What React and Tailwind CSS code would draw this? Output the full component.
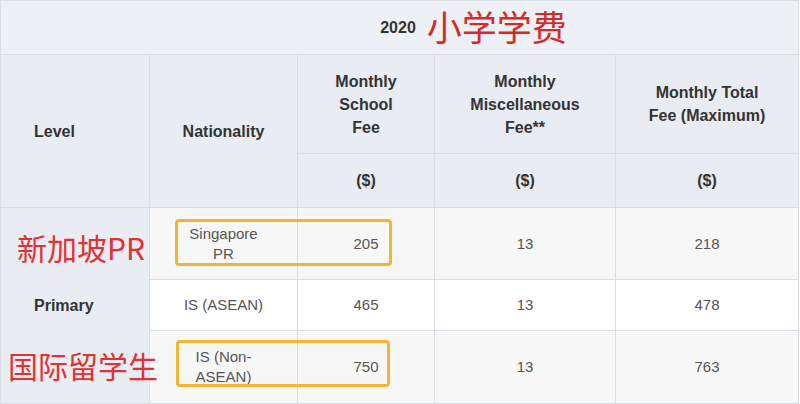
import React from "react";

const rows = [
  { nat: <>Singapore<br />PR</>, school: "205", misc: "13", total: "218", bg: "bg-[#f7f7f7]", h: "h-[72px]" },
  { nat: "IS (ASEAN)", school: "465", misc: "13", total: "478", bg: "bg-white", h: "h-[51px]" },
  { nat: <>IS (Non-<br />ASEAN)</>, school: "750", misc: "13", total: "763", bg: "bg-[#f7f7f7]", h: "h-[73px]" },
];

const App = () => {
  return (
    <div className="relative w-[800px] h-[404px] bg-white font-['Liberation_Sans',Arial,sans-serif] overflow-hidden">
      <table className="w-[798px] table-fixed border-collapse border border-[#d9dee4]">
        <colgroup>
          <col className="w-[149px]" />
          <col className="w-[148px]" />
          <col className="w-[137px]" />
          <col className="w-[181px]" />
          <col className="w-[183px]" />
        </colgroup>
        <thead className="text-[#333] text-[16px] font-bold leading-[23px]">
          {/* Title row */}
          <tr className="h-[54px] bg-[#edf0f4]">
            <th colSpan={5} className="border border-[#d9dee4] p-0">
              <div className="flex items-center justify-center gap-[11px] pl-[148px]">
                <span>2020</span>
                <span className="text-[35px] leading-none font-normal text-[#d42a2a] font-['Noto_Sans_CJK_SC',sans-serif] -mt-[4px]">
                  小学学费
                </span>
              </div>
            </th>
          </tr>
          <tr className="h-[99px] bg-[#e9ecf2]">
            <th rowSpan={2} className="border border-[#d9dee4] text-left pl-[33px] font-bold">
              Level
            </th>
            <th rowSpan={2} className="border border-[#d9dee4] text-center">
              Nationality
            </th>
            <th className="border border-[#d9dee4] text-center">
              Monthly<br />School<br />Fee
            </th>
            <th className="border border-[#d9dee4] text-center">
              Monthly<br />Miscellaneous<br />Fee**
            </th>
            <th className="border border-[#d9dee4] text-center">
              Monthly Total<br />Fee (Maximum)
            </th>
          </tr>
          <tr className="h-[54px] bg-[#e9ecf2]">
            <th className="border border-[#d9dee4] text-center">($)</th>
            <th className="border border-[#d9dee4] text-center">($)</th>
            <th className="border border-[#d9dee4] text-center">($)</th>
          </tr>
        </thead>
        <tbody className="text-[15px] text-[#555] leading-[20px]">
          {rows.map((r, i) => (
            <tr key={i} className={`${r.h} ${r.bg}`}>
              {i === 0 && (
                <td rowSpan={3} className="border border-[#d9dee4] bg-[#e9ecf2] pl-[33px] text-[16px] font-bold text-[#333]">
                  Primary
                </td>
              )}
              <td className="border border-[#d9dee4] text-center">{r.nat}</td>
              <td className="border border-[#d9dee4] text-center">{r.school}</td>
              <td className="border border-[#d9dee4] text-center">{r.misc}</td>
              <td className="border border-[#d9dee4] text-center">{r.total}</td>
            </tr>
          ))}
        </tbody>
      </table>

      {/* annotations over the table */}
      <div className="absolute left-[175px] top-[219px] w-[217px] h-[47px] border-[3px] border-[#f2b731] rounded-[4px]" />
      <div className="absolute left-[176px] top-[340px] w-[214px] h-[47px] border-[3px] border-[#f2b731] rounded-[4px]" />
      <div className="absolute left-[17px] top-[232px] text-[30px] leading-none text-[#e03232] font-['Noto_Sans_CJK_SC',sans-serif]">
        新加坡PR
      </div>
      <div className="absolute left-[8px] top-[350px] text-[30px] leading-none text-[#e03232] font-['Noto_Sans_CJK_SC',sans-serif]">
        国际留学生
      </div>
    </div>
  );
};

export default App;
